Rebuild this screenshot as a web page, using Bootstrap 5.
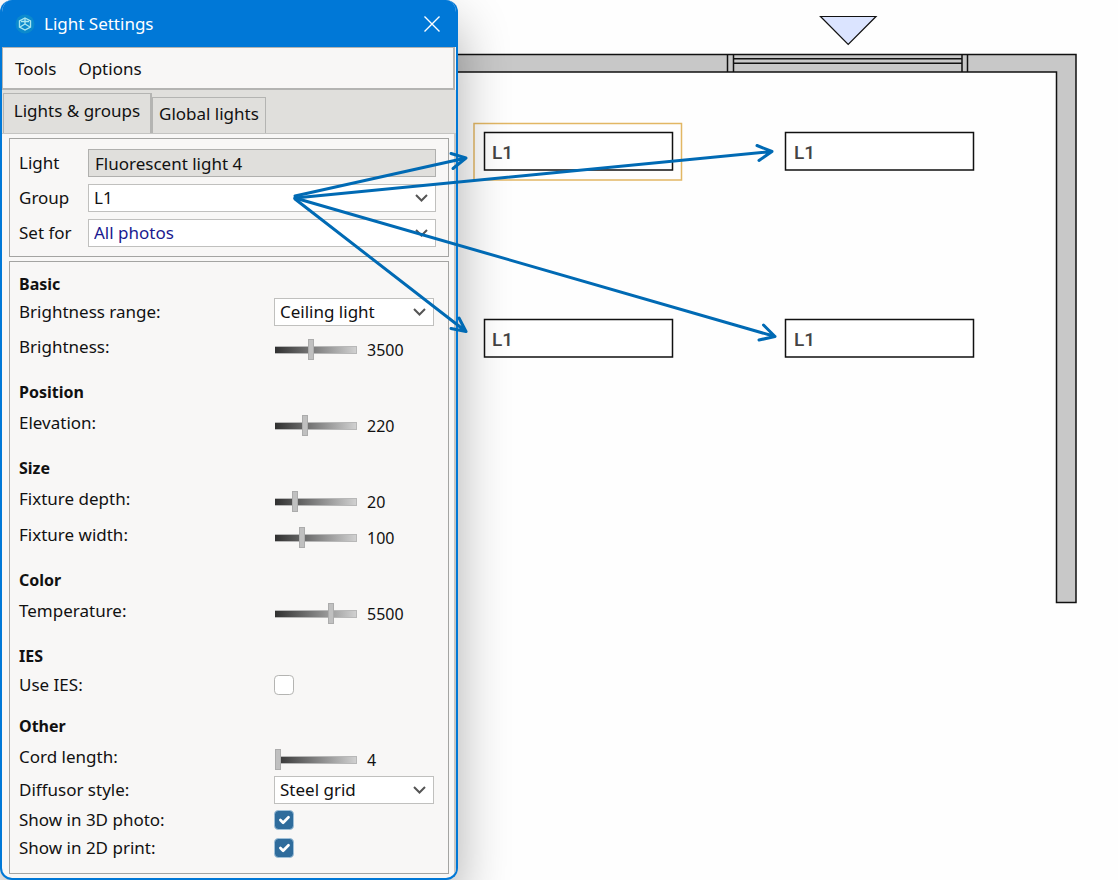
<!DOCTYPE html>
<html lang="en">
<head>
<meta charset="utf-8">
<meta name="viewport" content="width=device-width, initial-scale=1">
<title>Light Settings</title>
<link href="https://cdn.jsdelivr.net/npm/bootstrap@5.3.0/dist/css/bootstrap.min.css" rel="stylesheet">
<style>
  body { font-family: "Noto Sans", "Open Sans", sans-serif; font-size: 17px; line-height: 24px; color: #111; background: #fefefe; }
  .stage { min-height: 100vh; overflow: hidden; }
  .dialog { width: 458px; z-index: 1; background: #f8f7f6; border: 2px solid #0078d7; border-top: 0; border-radius: 12px; box-shadow: 0 24px 52px rgba(0,0,0,.32); overflow: hidden; }
  .titlebar { height: 47px; background: #0078d7; color: #fff; padding: 0 14px 0 12px; }
  .close-x { border: 0; background: none; padding: 0; line-height: 0; }
  .menubar { height: 43px; border: 2px solid #b4b4b2; border-width: 1px 2px 2px 1px; padding: 2px 12px 0; gap: 22px; margin-right: 1px; background: #f8f7f6; }
  .menubar a { color: #111; text-decoration: none; }
  .tabs { height: 44px; background: #e0dfdc; padding-left: 1px; border-bottom: 1px solid #c4c4c2; }
  .tabs button { border: 1px solid #b4b4b2; background: #e0dfdc; padding: 0 6px 4px; height: 36px; color: #111; border-bottom: 0; white-space: nowrap; }
  .tabs button.current { height: 40px; width: 149px; padding: 0 8px 6px; border-right-width: 2px; }
  .pane { border-right: 2px solid #c8c7c4; padding: 4px 5px 4px 7px; gap: 4px; }
  .group-box { border: 1px solid #a4a4a2; }
  .target { padding: 10px 12px 9px 9px; gap: 7px; }
  .target label { width: 69px; }
  .field { height: 28px; border: 1px solid #c0c0be; border-radius: 0; background: #fff; color: #111; padding: 0 5px; min-width: 0; }
  .field[readonly] { background: #e0dfdc; border-color: #b0b0ae; padding: 0 6px; }
  select.field { appearance: none; padding-right: 28px; }
  .pick { position: relative; }
  .pick svg { position: absolute; right: 7px; top: 9px; pointer-events: none; }
  .navy { color: #1a1a90; }
  .props { padding: 10px 14px 8px 9px; }
  .props section + section { margin-top: 16px; }
  .props h2 { font-size: 16px; line-height: 24px; font-weight: 700; margin: 0; }
  .prop { display: grid; grid-template-columns: 255px 1fr; align-items: center; }
  .prop-select { height: 32px; }
  .prop-check { height: 28px; }
  .prop-single { height: 30px; padding-top: 4px; }
  .prop-slider { height: 36px; }
  .prop-slider > div { padding: 8px 0 0 1px; gap: 10px; }
  .prop-slider > label { padding-top: 2px; }
  input[type=range] { appearance: none; width: 82px; height: 21px; margin: 0; background: none; display: block; }
  input[type=range]::-webkit-slider-runnable-track { height: 8px; border: 1px solid #b8b8b8; border-width: 1px 1px 1px 0; background: linear-gradient(90deg, #303030, #d0d0d0); }
  input[type=range]::-webkit-slider-thumb { appearance: none; width: 6px; height: 21px; margin-top: -8px; border: 1px solid #acacac; background: #c0c0c0; border-radius: 0; }
  output { font-size: 16px; line-height: 24px; }
  .form-check-input { width: 20px; height: 20px; margin: 0; border-radius: 5px; border-color: #b4b4b2; display: block; }
  .form-check-input:checked { background-color: #2f6c9c; border-color: #9fc0d8; }
  .plan text { font-family: Roboto, sans-serif; font-weight: 500; font-size: 19px; fill: #444; }
  .arrows { position: absolute; left: 0; top: 0; z-index: 2; pointer-events: none; }
</style>
</head>
<body>
<main class="stage d-flex position-relative">
  <div class="dialog d-flex flex-column flex-shrink-0 position-relative">
    <header class="titlebar d-flex align-items-center justify-content-between flex-shrink-0">
      <div class="d-flex align-items-center gap-2">
        <svg width="22" height="22" viewBox="0 0 22 22" fill="none" stroke="#a8e6f0" stroke-width="1.400" aria-hidden="true">
          <circle cx="11" cy="11" r="9.500" fill="#159cc4" fill-opacity=".5" stroke="none"/>
          <path d="M11 5 16.500 8V14L11 17 5.500 14V8Z"/><path d="M11 5V11M11 11 6 14M11 11 16 14M7 8.500H15"/>
        </svg>
        <span>Light Settings</span>
      </div>
      <button type="button" class="close-x" aria-label="Close"><svg width="20" height="20" viewBox="0 0 20 20" stroke="#fff" stroke-width="1.400"><path d="M2.500 2.500 17.500 17.500M17.500 2.500 2.500 17.500"/></svg></button>
    </header>
    <nav class="menubar d-flex align-items-center flex-shrink-0"><a href="#">Tools</a><a href="#">Options</a></nav>
    <div class="tabs d-flex align-items-end flex-shrink-0" role="tablist">
      <button type="button" class="current" role="tab" aria-selected="true">Lights &amp; groups</button>
      <button type="button" role="tab" aria-selected="false">Global lights</button>
    </div>
    <div class="pane d-flex flex-column flex-grow-1">
      <div class="group-box target d-flex flex-column">
        <div class="d-flex align-items-center"><label for="light">Light</label><input id="light" class="field flex-grow-1" value="Fluorescent light 4" readonly></div>
        <div class="d-flex align-items-center"><label for="group">Group</label><div class="pick flex-grow-1"><select id="group" class="field w-100 d-block"><option>L1</option></select><svg width="15" height="10" fill="none" stroke="#555" stroke-width="2"><path d="M2 2 7.500 7.500 13 2"/></svg></div></div>
        <div class="d-flex align-items-center"><label for="setfor">Set for</label><div class="pick flex-grow-1"><select id="setfor" class="field navy w-100 d-block"><option>All photos</option></select><svg width="15" height="10" fill="none" stroke="#555" stroke-width="2"><path d="M2 2 7.500 7.500 13 2"/></svg></div></div>
      </div>
      <div class="group-box props flex-grow-1">
        <section>
          <h2>Basic</h2>
          <div class="prop prop-select"><label for="range">Brightness range:</label><div class="pick"><select id="range" class="field w-100 d-block"><option>Ceiling light</option></select><svg width="15" height="10" fill="none" stroke="#555" stroke-width="2"><path d="M2 2 7.500 7.500 13 2"/></svg></div></div>
          <div class="prop prop-slider"><label for="bright">Brightness:</label><div class="d-flex align-items-center"><input type="range" id="bright" max="7950" value="3500"><output for="bright">3500</output></div></div>
        </section>
        <section>
          <h2>Position</h2>
          <div class="prop prop-slider"><label for="elev">Elevation:</label><div class="d-flex align-items-center"><input type="range" id="elev" max="610" value="220"><output for="elev">220</output></div></div>
        </section>
        <section>
          <h2>Size</h2>
          <div class="prop prop-slider"><label for="depth">Fixture depth:</label><div class="d-flex align-items-center"><input type="range" id="depth" max="90" value="20"><output for="depth">20</output></div></div>
          <div class="prop prop-slider"><label for="fwidth">Fixture width:</label><div class="d-flex align-items-center"><input type="range" id="fwidth" max="310" value="100"><output for="fwidth">100</output></div></div>
        </section>
        <section>
          <h2>Color</h2>
          <div class="prop prop-slider"><label for="temp">Temperature:</label><div class="d-flex align-items-center"><input type="range" id="temp" max="7850" value="5500"><output for="temp">5500</output></div></div>
        </section>
        <section>
          <h2>IES</h2>
          <div class="prop prop-single"><label for="ies">Use IES:</label><input type="checkbox" class="form-check-input" id="ies"></div>
        </section>
        <section>
          <h2>Other</h2>
          <div class="prop prop-slider"><label for="cord">Cord length:</label><div class="d-flex align-items-center"><input type="range" id="cord" min="4" max="300" value="4"><output for="cord">4</output></div></div>
          <div class="prop prop-select"><label for="diff">Diffusor style:</label><div class="pick"><select id="diff" class="field w-100 d-block"><option>Steel grid</option></select><svg width="15" height="10" fill="none" stroke="#555" stroke-width="2"><path d="M2 2 7.500 7.500 13 2"/></svg></div></div>
          <div class="prop prop-check"><label for="s3d">Show in 3D photo:</label><input type="checkbox" class="form-check-input" id="s3d" checked></div>
          <div class="prop prop-check"><label for="s2d">Show in 2D print:</label><input type="checkbox" class="form-check-input" id="s2d" checked></div>
        </section>
      </div>
    </div>
  </div>

  <!-- Floor plan: wall, window, entry marker and the four fixtures -->
  <svg class="plan flex-grow-1" width="0" height="620" role="img" aria-label="Floor plan">
    <g transform="translate(-458 0)" stroke="#111" stroke-width="1.500" fill="none">
      <path fill="#c8c8c8" d="M440 54.500H1076V602.500H1056.500V72H440Z"/>
      <path d="M727.500 54V72M733.500 54V72M962 54V72M967.500 54V72M733.500 58.800H962M733.500 63.200H962"/>
      <path fill="#dbe4ff" stroke-width="1.200" d="M820.500 16.500H876L848.200 44.300Z"/>
      <path stroke="#e2b764" d="M474 123.500H681.500V180H474Z"/>
      <g fill="#fff">
        <path d="M484.500 132.500H672.500V170H484.500ZM785.500 132.500H973.500V170H785.500ZM484.500 319.500H672.500V357H484.500ZM785.500 319.500H973.500V357H785.500Z"/>
      </g>
      <g stroke="none">
        <text x="492" y="159">L1</text><text x="794" y="159">L1</text>
        <text x="492" y="346">L1</text><text x="794" y="346">L1</text>
      </g>
    </g>
  </svg>

  <!-- Arrows from the group field to each fixture -->
  <svg class="arrows" width="800" height="360" fill="none" stroke="#006ab4" stroke-width="3" stroke-linecap="round" stroke-linejoin="round" aria-hidden="true">
    <path d="M295 196 466 158M451 153.500 466 158 453 168.500"/>
    <path d="M295 198 772 151.500M757 145.500 772 151.500 759 160.500"/>
    <path d="M295 198 775 336.500M763.500 325 775 336.500 759 340"/>
    <path d="M295 199 466 331.500M459 318 466 331.500 451 328.500"/>
  </svg>
</main>
<script src="https://cdn.jsdelivr.net/npm/bootstrap@5.3.0/dist/js/bootstrap.bundle.min.js"></script>
</body>
</html>
